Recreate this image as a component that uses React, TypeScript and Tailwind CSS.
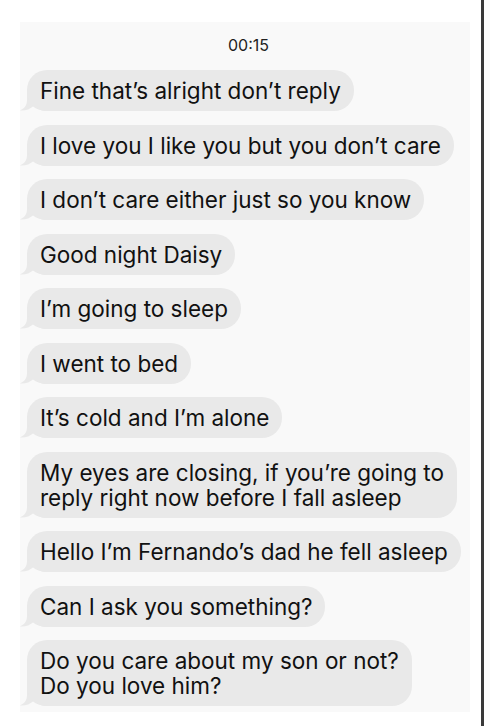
const messages: string[][] = [
  ["Fine that’s alright don’t reply"],
  ["I love you I like you but you don’t care"],
  ["I don’t care either just so you know"],
  ["Good night Daisy"],
  ["I’m going to sleep"],
  ["I went to bed"],
  ["It’s cold and I’m alone"],
  ["My eyes are closing, if you’re going to", "reply right now before I fall asleep"],
  ["Hello I’m Fernando’s dad he fell asleep"],
  ["Can I ask you something?"],
  ["Do you care about my son or not?", "Do you love him?"],
];

// little curl at the bottom-left of each incoming bubble
function Tail() {
  return (
    <svg
      className="absolute -left-[7px] bottom-0"
      width="26"
      height="22"
      viewBox="0 0 26 22"
    >
      <path
        d="M7 0 L7 11 C7 16 5 19 0 21.5 C6 21.8 10 20 13 17.5 C16 20 21 21.5 26 22 L26 0 Z"
        fill="#e9e9e9"
      />
    </svg>
  );
}

function Bubble({ lines }: { lines: string[] }) {
  return (
    <div className="relative self-start">
      <Tail />
      <div className="relative rounded-[20px] bg-[#e9e9e9] px-[13px] py-2 text-[22.5px] leading-[25px] text-[#111]">
        {lines.map((l, i) => (
          <div key={i} className="whitespace-nowrap">
            {l}
          </div>
        ))}
      </div>
    </div>
  );
}

export default function App() {
  return (
    <div
      className="flex h-[726px] w-[484px] overflow-hidden bg-white"
      style={{ fontFamily: "Inter, 'Liberation Sans', sans-serif" }}
    >
      <div className="flex-1 bg-white pt-[22px] pl-[20px]">
        <div className="flex h-[690px] w-[450px] flex-col bg-[#f9f9f9] pl-[7px]">
          <p className="mt-[14px] text-center text-[16px] leading-[18px] text-[#222]">
            00:15
          </p>
          <div className="mt-[16px] flex flex-col gap-[13.5px]">
            {messages.map((m, i) => (
              <Bubble key={i} lines={m} />
            ))}
          </div>
        </div>
      </div>
      <div className="w-[3px] bg-[#3a3a3a]" />
    </div>
  );
}
